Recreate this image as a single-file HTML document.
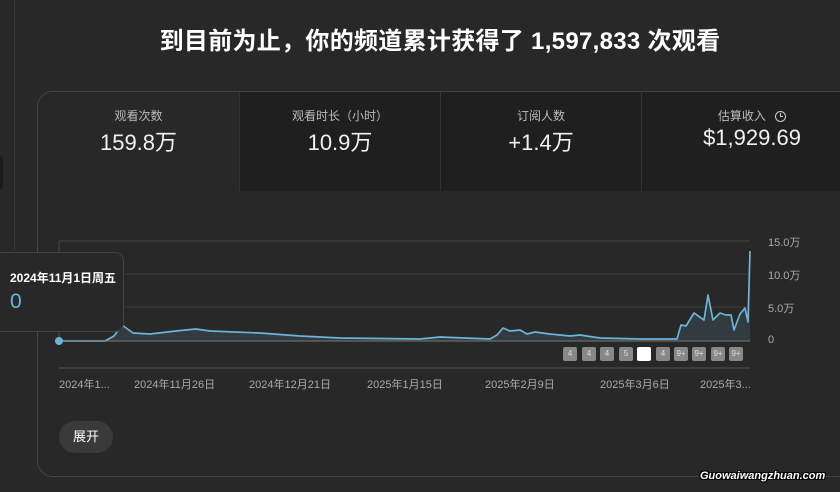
<!DOCTYPE html>
<html><head><meta charset="utf-8"><style>
body{margin:0;width:840px;height:492px;background:#282828;overflow:hidden;position:relative;font-family:"Liberation Sans","Noto Sans CJK SC",sans-serif;color:#fff}
.title{position:absolute;top:21px;left:0;width:880px;text-align:center;font-size:24px;font-weight:bold;letter-spacing:0.3px}
.card{position:absolute;left:37px;top:91px;width:820px;height:384px;border:1px solid #444;border-radius:16px;overflow:hidden}
.tab{position:absolute;top:0;height:99px;background:#1f1f1f;text-align:center}
.tab .l{font-size:12px;color:#bbb;margin-top:15px}
.tab .v{font-size:22px;margin-top:1px;color:#f1f1f1}
.axis{position:absolute;font-size:11px;color:#aaa}
.badge{position:absolute;top:347px;width:14px;height:14px;background:#888;color:#ddd;font-size:8px;text-align:center;line-height:14px;border-radius:2px}
</style></head><body>
<div class="title">到目前为止，你的频道累计获得了 1,597,833 次观看</div>
<div style="position:absolute;left:14px;top:0;width:1px;height:250px;background:#3a3a3a"></div>
<div style="position:absolute;left:-6px;top:156px;width:9px;height:34px;background:#1c1c1c;border-radius:4px"></div>
<div class="card">
 <div class="tab" style="left:0;width:201px;background:#282828"><div class="l">观看次数</div><div class="v">159.8万</div></div>
 <div class="tab" style="left:201px;width:200px;border-left:1px solid #333"><div class="l">观看时长（小时）</div><div class="v">10.9万</div></div>
 <div class="tab" style="left:402px;width:200px;border-left:1px solid #333"><div class="l">订阅人数</div><div class="v">+1.4万</div></div>
 <div class="tab" style="left:603px;width:220px;border-left:1px solid #333"><div class="l">估算收入 <span style="display:inline-block;width:9px;height:9px;border:1.5px solid #ccc;border-radius:50%;vertical-align:-2px;margin-left:6px;position:relative"><span style="position:absolute;left:4px;top:1px;width:1px;height:4px;background:#ccc"></span><span style="position:absolute;left:4px;top:4px;width:3px;height:1px;background:#ccc"></span></span></div><div class="v">$1,929.69</div></div>
</div>
<svg style="position:absolute;left:0;top:0" width="840" height="492">
 <line x1="59" y1="241" x2="750" y2="241" stroke="#444"/>
 <line x1="59" y1="274" x2="750" y2="274" stroke="#3d3d3d"/>
 <line x1="59" y1="307" x2="750" y2="307" stroke="#3d3d3d"/>
 <line x1="59" y1="241" x2="59" y2="341" stroke="#4a4a4a"/>
 <line x1="59" y1="368" x2="750" y2="368" stroke="#555"/>
 <polygon fill="#36434a" opacity="0.7" points="59,341 105,341 114,336 122,325 133,333 150,334 176,331 196,329 210,331 260,333 300,336 340,338 420,339 440,337 490,339 497,335 503,328 510,331 520,330 527,334 535,332 550,334 570,336 580,335 600,338 640,339 677,339 681,325 686,326 694,313 704,320 708,295 713,320 720,313 726,315 731,315 734,330 740,314 745,308 748,322 750,251 750,341"/>
 <polyline fill="none" stroke="#6cb4d8" stroke-width="1.7" stroke-linejoin="round" points="59,341 105,341 114,336 122,325 133,333 150,334 176,331 196,329 210,331 260,333 300,336 340,338 420,339 440,337 490,339 497,335 503,328 510,331 520,330 527,334 535,332 550,334 570,336 580,335 600,338 640,339 677,339 681,325 686,326 694,313 704,320 708,295 713,320 720,313 726,315 731,315 734,330 740,314 745,308 748,322 750,251"/>
 <line x1="59" y1="341" x2="750" y2="341" stroke="#777" stroke-width="1"/>
 <circle cx="59" cy="341" r="4" fill="#6cb4d8"/>
</svg>
<div class="axis" style="left:768px;top:234px">15.0万</div>
<div class="axis" style="left:768px;top:267px">10.0万</div>
<div class="axis" style="left:768px;top:300px">5.0万</div>
<div class="axis" style="left:768px;top:334px">0</div>
<div class="badge" style="left:563px">4</div><div class="badge" style="left:582px">4</div><div class="badge" style="left:600px">4</div><div class="badge" style="left:619px">5</div><div class="badge" style="left:637px;background:#fff"></div><div class="badge" style="left:656px">4</div><div class="badge" style="left:674px">9+</div><div class="badge" style="left:692px">9+</div><div class="badge" style="left:711px">9+</div><div class="badge" style="left:729px">9+</div>
<div class="axis" style="left:59px;top:376px">2024年1...</div>
<div class="axis" style="left:134px;top:376px">2024年11月26日</div>
<div class="axis" style="left:249px;top:376px">2024年12月21日</div>
<div class="axis" style="left:367px;top:376px">2025年1月15日</div>
<div class="axis" style="left:485px;top:376px">2025年2月9日</div>
<div class="axis" style="left:600px;top:376px">2025年3月6日</div>
<div class="axis" style="left:700px;top:376px">2025年3...</div>
<div style="position:absolute;left:-10px;top:252px;width:132px;height:78px;background:#282828;border:1px solid #444;border-radius:9px">
 <div style="position:absolute;left:19px;top:16px;font-size:12px;font-weight:bold">2024年11月1日周五</div>
 <div style="position:absolute;left:19px;top:37px;font-size:21px;color:#6cb4d8">0</div>
</div>
<div style="position:absolute;left:59px;top:421px;width:54px;height:32px;border-radius:16px;background:#3a3a3a;font-size:13px;text-align:center;line-height:32px">展开</div>
<div style="position:absolute;left:700px;top:470px;font-size:11px;font-weight:bold;font-style:italic;color:#fff;text-shadow:1px 1px 0 #000,-1px -1px 0 #000,1px -1px 0 #000,-1px 1px 0 #000">Guowaiwangzhuan.com</div>
</body></html>
